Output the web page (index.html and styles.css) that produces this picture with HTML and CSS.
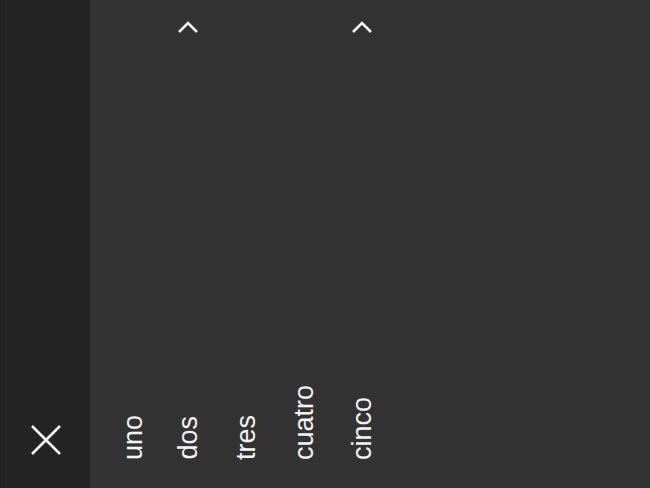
FILE: index.html
```html
<!DOCTYPE html>
<html lang="es">

<head>
	<meta charset="utf-8">
	<title>Menú</title>
	<link rel="stylesheet" href="styles.css">
</head>

<body>
	<aside class="sidebar">
		<button class="close" aria-label="Cerrar">
			<svg width="32" height="32" viewBox="0 0 32 32">
				<path d="M2 2 L30 30 M30 2 L2 30" />
			</svg>
		</button>
	</aside>

	<main class="tabs">
		<div class="tab">
			<span class="mark"></span>
			<span class="label">uno</span>
		</div>
		<div class="tab">
			<span class="mark">
				<svg width="22" height="14" viewBox="0 0 22 14">
					<polyline points="2,12 11,3 20,12" />
				</svg>
			</span>
			<span class="label">dos</span>
		</div>
		<div class="tab">
			<span class="mark"></span>
			<span class="label">tres</span>
		</div>
		<div class="tab">
			<span class="mark"></span>
			<span class="label">cuatro</span>
		</div>
		<div class="tab">
			<span class="mark">
				<svg width="22" height="14" viewBox="0 0 22 14">
					<polyline points="2,12 11,3 20,12" />
				</svg>
			</span>
			<span class="label">cinco</span>
		</div>
	</main>
</body>

</html>
```

FILE: styles.css
```css
html,
body {
	margin: 0;
	height: 100%;
}

body {
	display: flex;
	background: #333333;
	font-family: "Liberation Sans", Arial, sans-serif;
	color: #f4f4f4;
	overflow: hidden;
}

.sidebar {
	width: 90px;
	flex-shrink: 0;
	background: #242424;
	border-left: 1px solid #1d1d1d;
	display: flex;
	flex-direction: column;
	justify-content: flex-end;
	align-items: center;
	padding-bottom: 32px;
	box-sizing: border-box;
}

.close {
	border: 0;
	padding: 0;
	margin: 0;
	background: transparent;
	width: 32px;
	height: 32px;
	cursor: pointer;
}

.close svg {
	display: block;
}

.close path {
	stroke: #f4f4f4;
	stroke-width: 2.6;
	fill: none;
}

.tabs {
	flex: 1;
	display: flex;
	padding-left: 11px;
}

.tab {
	width: 58px;
	display: flex;
	flex-direction: column;
	justify-content: space-between;
	align-items: center;
	padding-top: 20px;
	padding-bottom: 28px;
}

.mark {
	height: 14px;
}

.mark svg {
	display: block;
}

.mark polyline {
	stroke: #f4f4f4;
	stroke-width: 2.6;
	fill: none;
}

.label {
	writing-mode: vertical-rl;
	transform: rotate(180deg);
	font-size: 27px;
	line-height: 58px;
	white-space: nowrap;
}

.tab:first-child .label {
	margin-left: 6px;
}
```
